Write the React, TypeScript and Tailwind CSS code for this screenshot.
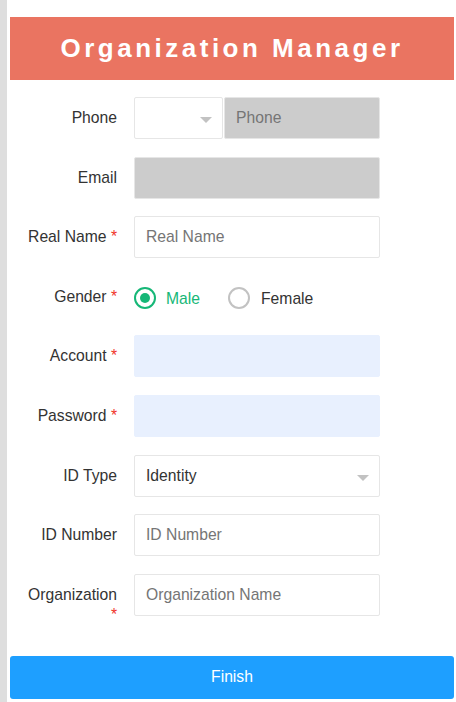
import { useState } from 'react';

const font = { fontFamily: '"Liberation Sans", Arial, sans-serif' };

function Label({ text, required }: { text: string; required?: boolean }) {
  return (
    <div className="h-[42px] w-[92px] shrink-0 pt-[11px] text-right text-[15.7px] leading-[20px] text-[#333]">
      {text}
      {required && <span className="text-[#f0352b]"> *</span>}
    </div>
  );
}

function Arrow() {
  return (
    <span className="absolute right-[10px] top-[19px] h-0 w-0 border-x-[6px] border-t-[6px] border-x-transparent border-t-[#c2c2c2]" />
  );
}

const inputCls =
  'h-[42px] w-full rounded-[2px] border border-[#e6e6e6] pl-[11px] text-[15.7px] text-[#333] outline-none placeholder:text-[#757575]';

export default function App() {
  const [gender, setGender] = useState('male');

  return (
    <div className="flex min-h-[702px] bg-white" style={font}>
      <div className="w-[7px] shrink-0 bg-[#dedede]" />
      <div className="flex flex-1 flex-col pl-[3px] pr-[2px] pt-[17px]">
        <div className="flex h-[63px] items-center justify-center bg-[#ea7461]">
          <h1 className="text-[26px] font-bold tracking-[3.5px] text-white">Organization Manager</h1>
        </div>

        <form className="mt-[17px] flex flex-col gap-[17.6px]">
          <div className="flex">
            <div className="pl-[15px]" />
            <Label text="Phone" />
            <div className="ml-[17px] flex w-[246px] gap-[1px]">
              <div className="relative h-[42px] w-[89px] shrink-0 rounded-[2px] border border-[#e6e6e6] bg-white">
                <Arrow />
              </div>
              <input className={`${inputCls} bg-[#cccccc]`} placeholder="Phone" disabled />
            </div>
          </div>

          <div className="flex">
            <div className="pl-[15px]" />
            <Label text="Email" />
            <div className="ml-[17px] w-[246px]">
              <input className={`${inputCls} bg-[#cccccc]`} disabled />
            </div>
          </div>

          <div className="flex">
            <div className="pl-[15px]" />
            <Label text="Real Name" required />
            <div className="ml-[17px] w-[246px]">
              <input className={`${inputCls} bg-white`} placeholder="Real Name" />
            </div>
          </div>

          <div className="flex">
            <div className="pl-[15px]" />
            <Label text="Gender" required />
            <div className="ml-[17px] flex h-[42px] w-[246px] items-center pt-[3px]">
              <button
                type="button"
                onClick={() => setGender('male')}
                className="flex items-center gap-[10px]"
              >
                <span
                  className={`flex h-[22px] w-[22px] items-center justify-center rounded-full border-2 ${
                    gender === 'male' ? 'border-[#16b777]' : 'border-[#c2c2c2]'
                  }`}
                >
                  {gender === 'male' && <span className="h-[10px] w-[10px] rounded-full bg-[#16b777]" />}
                </span>
                <span className={`text-[15.7px] ${gender === 'male' ? 'text-[#16b777]' : 'text-[#333]'}`}>Male</span>
              </button>
              <button
                type="button"
                onClick={() => setGender('female')}
                className="ml-[28px] flex items-center gap-[11px]"
              >
                <span
                  className={`flex h-[22px] w-[22px] items-center justify-center rounded-full border-2 ${
                    gender === 'female' ? 'border-[#16b777]' : 'border-[#c2c2c2]'
                  }`}
                >
                  {gender === 'female' && <span className="h-[10px] w-[10px] rounded-full bg-[#16b777]" />}
                </span>
                <span className={`text-[15.7px] ${gender === 'female' ? 'text-[#16b777]' : 'text-[#333]'}`}>Female</span>
              </button>
            </div>
          </div>

          <div className="flex">
            <div className="pl-[15px]" />
            <Label text="Account" required />
            <div className="ml-[17px] w-[246px]">
              <input className={`${inputCls} border-[#e8f0fe] bg-[#e8f0fe]`} />
            </div>
          </div>

          <div className="flex">
            <div className="pl-[15px]" />
            <Label text="Password" required />
            <div className="ml-[17px] w-[246px]">
              <input type="password" className={`${inputCls} border-[#e8f0fe] bg-[#e8f0fe]`} />
            </div>
          </div>

          <div className="flex">
            <div className="pl-[15px]" />
            <Label text="ID Type" />
            <div className="relative ml-[17px] flex h-[42px] w-[246px] items-center rounded-[2px] border border-[#e6e6e6] bg-white pl-[11px] text-[15.7px] text-[#333]">
              Identity
              <Arrow />
            </div>
          </div>

          <div className="flex">
            <div className="pl-[15px]" />
            <Label text="ID Number" />
            <div className="ml-[17px] w-[246px]">
              <input className={`${inputCls} bg-white`} placeholder="ID Number" />
            </div>
          </div>

          <div className="flex">
            <div className="pl-[15px]" />
            <Label text="Organization" required />
            <div className="ml-[17px] w-[246px]">
              <input className={`${inputCls} bg-white`} placeholder="Organization Name" />
            </div>
          </div>
        </form>

        <button
          type="button"
          className="mt-[40px] h-[43px] w-full rounded-[3px] bg-[#1e9fff] text-[15.7px] text-white"
        >
          Finish
        </button>
      </div>
    </div>
  );
}
